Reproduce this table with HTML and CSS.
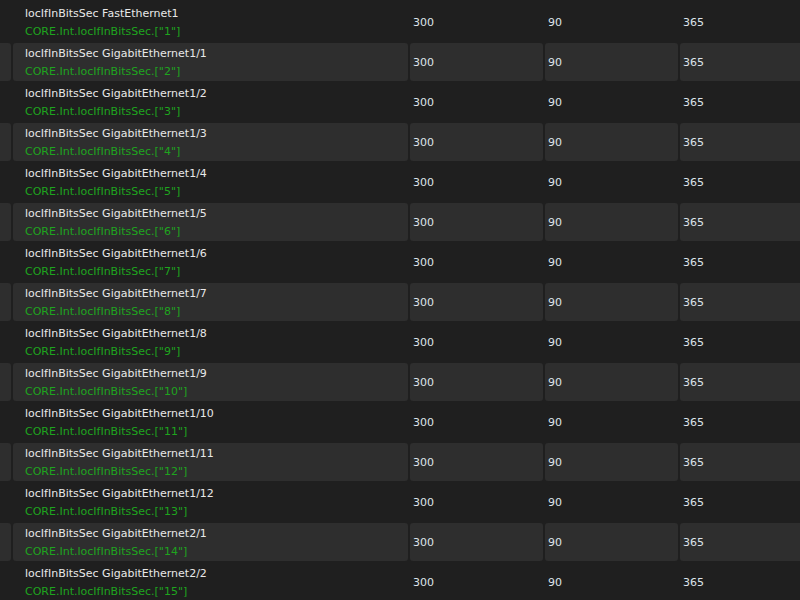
FILE: index.html
```html
<!DOCTYPE html>
<html lang="en">
<head>
  <meta charset="UTF-8" />
  <title>Items</title>
  <link rel="stylesheet" href="styles.css">
</head>
<body>
  <div class="item-list">
    <div class="item-row">
      <div class="cell cell-edge"></div>
      <div class="cell cell-name">
        <div class="item-title">locIfInBitsSec FastEthernet1</div>
        <div class="item-key">CORE.Int.locIfInBitsSec.["1"]</div>
      </div>
      <div class="cell cell-num">300</div>
      <div class="cell cell-num">90</div>
      <div class="cell cell-num">365</div>
    </div>
    <div class="item-row">
      <div class="cell cell-edge"></div>
      <div class="cell cell-name">
        <div class="item-title">locIfInBitsSec GigabitEthernet1/1</div>
        <div class="item-key">CORE.Int.locIfInBitsSec.["2"]</div>
      </div>
      <div class="cell cell-num">300</div>
      <div class="cell cell-num">90</div>
      <div class="cell cell-num">365</div>
    </div>
    <div class="item-row">
      <div class="cell cell-edge"></div>
      <div class="cell cell-name">
        <div class="item-title">locIfInBitsSec GigabitEthernet1/2</div>
        <div class="item-key">CORE.Int.locIfInBitsSec.["3"]</div>
      </div>
      <div class="cell cell-num">300</div>
      <div class="cell cell-num">90</div>
      <div class="cell cell-num">365</div>
    </div>
    <div class="item-row">
      <div class="cell cell-edge"></div>
      <div class="cell cell-name">
        <div class="item-title">locIfInBitsSec GigabitEthernet1/3</div>
        <div class="item-key">CORE.Int.locIfInBitsSec.["4"]</div>
      </div>
      <div class="cell cell-num">300</div>
      <div class="cell cell-num">90</div>
      <div class="cell cell-num">365</div>
    </div>
    <div class="item-row">
      <div class="cell cell-edge"></div>
      <div class="cell cell-name">
        <div class="item-title">locIfInBitsSec GigabitEthernet1/4</div>
        <div class="item-key">CORE.Int.locIfInBitsSec.["5"]</div>
      </div>
      <div class="cell cell-num">300</div>
      <div class="cell cell-num">90</div>
      <div class="cell cell-num">365</div>
    </div>
    <div class="item-row">
      <div class="cell cell-edge"></div>
      <div class="cell cell-name">
        <div class="item-title">locIfInBitsSec GigabitEthernet1/5</div>
        <div class="item-key">CORE.Int.locIfInBitsSec.["6"]</div>
      </div>
      <div class="cell cell-num">300</div>
      <div class="cell cell-num">90</div>
      <div class="cell cell-num">365</div>
    </div>
    <div class="item-row">
      <div class="cell cell-edge"></div>
      <div class="cell cell-name">
        <div class="item-title">locIfInBitsSec GigabitEthernet1/6</div>
        <div class="item-key">CORE.Int.locIfInBitsSec.["7"]</div>
      </div>
      <div class="cell cell-num">300</div>
      <div class="cell cell-num">90</div>
      <div class="cell cell-num">365</div>
    </div>
    <div class="item-row">
      <div class="cell cell-edge"></div>
      <div class="cell cell-name">
        <div class="item-title">locIfInBitsSec GigabitEthernet1/7</div>
        <div class="item-key">CORE.Int.locIfInBitsSec.["8"]</div>
      </div>
      <div class="cell cell-num">300</div>
      <div class="cell cell-num">90</div>
      <div class="cell cell-num">365</div>
    </div>
    <div class="item-row">
      <div class="cell cell-edge"></div>
      <div class="cell cell-name">
        <div class="item-title">locIfInBitsSec GigabitEthernet1/8</div>
        <div class="item-key">CORE.Int.locIfInBitsSec.["9"]</div>
      </div>
      <div class="cell cell-num">300</div>
      <div class="cell cell-num">90</div>
      <div class="cell cell-num">365</div>
    </div>
    <div class="item-row">
      <div class="cell cell-edge"></div>
      <div class="cell cell-name">
        <div class="item-title">locIfInBitsSec GigabitEthernet1/9</div>
        <div class="item-key">CORE.Int.locIfInBitsSec.["10"]</div>
      </div>
      <div class="cell cell-num">300</div>
      <div class="cell cell-num">90</div>
      <div class="cell cell-num">365</div>
    </div>
    <div class="item-row">
      <div class="cell cell-edge"></div>
      <div class="cell cell-name">
        <div class="item-title">locIfInBitsSec GigabitEthernet1/10</div>
        <div class="item-key">CORE.Int.locIfInBitsSec.["11"]</div>
      </div>
      <div class="cell cell-num">300</div>
      <div class="cell cell-num">90</div>
      <div class="cell cell-num">365</div>
    </div>
    <div class="item-row">
      <div class="cell cell-edge"></div>
      <div class="cell cell-name">
        <div class="item-title">locIfInBitsSec GigabitEthernet1/11</div>
        <div class="item-key">CORE.Int.locIfInBitsSec.["12"]</div>
      </div>
      <div class="cell cell-num">300</div>
      <div class="cell cell-num">90</div>
      <div class="cell cell-num">365</div>
    </div>
    <div class="item-row">
      <div class="cell cell-edge"></div>
      <div class="cell cell-name">
        <div class="item-title">locIfInBitsSec GigabitEthernet1/12</div>
        <div class="item-key">CORE.Int.locIfInBitsSec.["13"]</div>
      </div>
      <div class="cell cell-num">300</div>
      <div class="cell cell-num">90</div>
      <div class="cell cell-num">365</div>
    </div>
    <div class="item-row">
      <div class="cell cell-edge"></div>
      <div class="cell cell-name">
        <div class="item-title">locIfInBitsSec GigabitEthernet2/1</div>
        <div class="item-key">CORE.Int.locIfInBitsSec.["14"]</div>
      </div>
      <div class="cell cell-num">300</div>
      <div class="cell cell-num">90</div>
      <div class="cell cell-num">365</div>
    </div>
    <div class="item-row">
      <div class="cell cell-edge"></div>
      <div class="cell cell-name">
        <div class="item-title">locIfInBitsSec GigabitEthernet2/2</div>
        <div class="item-key">CORE.Int.locIfInBitsSec.["15"]</div>
      </div>
      <div class="cell cell-num">300</div>
      <div class="cell cell-num">90</div>
      <div class="cell cell-num">365</div>
    </div>
  </div>
</body>
</html>
```

FILE: styles.css
```css
:root {
  --bg-color: #1f1f1f;
  --stripe-color: #2e2e2e;
  --text-color: #e8e8e8;
  --key-color: #1ea51e;
}

body {
  margin: 0;
  background-color: var(--bg-color);
  font-family: 'DejaVu Sans', Verdana, sans-serif;
  font-size: 11px;
  color: var(--text-color);
  overflow: hidden;
}

.item-list {
  padding-top: 2px;
}

.item-row {
  display: grid;
  grid-template-columns: 15px 395px 133px 133px 1fr;
  gap: 2px;
  padding: 1px 0;
  margin-left: -4px;
  margin-right: -8px;
}

.cell {
  height: 38px;
  border-radius: 3px;
  box-sizing: border-box;
}

.item-row:nth-child(even) .cell {
  background-color: var(--stripe-color);
}

.cell-name {
  padding: 2px 0 0 12px;
}

.item-title,
.item-key {
  line-height: 18px;
  white-space: nowrap;
}

.item-key {
  color: var(--key-color);
}

.cell-num {
  display: flex;
  align-items: center;
  padding: 1px 0 0 3px;
  color: #dde3ea;
}
```
